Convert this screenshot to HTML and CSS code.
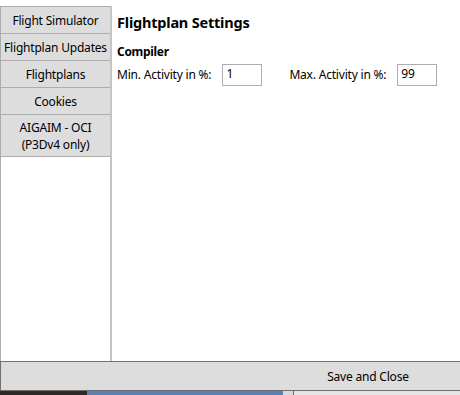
FILE: index.html
```html
<!DOCTYPE html>
<html lang="en">
<head>
    <meta charset="UTF-8">
    <title>Flightplan Settings</title>
    <link rel="stylesheet" href="styles.css">
</head>
<body>
    <div class="window">
        <div class="main">
            <div class="tabs">
                <div class="tab">Flight Simulator</div>
                <div class="tab">Flightplan Updates</div>
                <div class="tab active">Flightplans</div>
                <div class="tab">Cookies</div>
                <div class="tab tall">AIGAIM - OCI<br>(P3Dv4 only)</div>
            </div>
            <div class="content">
                <h1>Flightplan Settings</h1>
                <h2>Compiler</h2>
                <div class="row">
                    <label class="field">
                        <span>Min. Activity in %:</span>
                        <input type="text" value="1">
                    </label>
                    <label class="field">
                        <span>Max. Activity in %:</span>
                        <input type="text" value="99">
                    </label>
                </div>
            </div>
        </div>
        <div class="footer">
            <button class="save">Save and Close</button>
        </div>
        <div class="desktop">
            <div class="dk dark"></div>
            <div class="dk blue"></div>
            <div class="dk grey"></div>
            <div class="dk light"></div>
        </div>
    </div>
</body>
</html>
```
FILE: styles.css
```css
* {
    margin: 0;
    padding: 0;
    box-sizing: border-box;
}

body {
    font-family: 'Noto Sans', 'Open Sans', sans-serif;
    font-size: 12px;
    letter-spacing: -0.2px;
    color: #000000;
    background: #ffffff;
}

.window {
    width: 460px;
    height: 395px;
    display: flex;
    flex-direction: column;
}

.main {
    flex: 1;
    display: flex;
    padding-top: 6px;
}

.tabs {
    width: 112px;
    display: flex;
    flex-direction: column;
    border-left: 1px solid #adadad;
    border-right: 2px solid #c4c4c4;
}

.tab {
    height: 27px;
    display: flex;
    align-items: center;
    justify-content: center;
    text-align: center;
    background: #dddddd;
    border-top: 1px solid #adadad;
    line-height: 17px;
    white-space: nowrap;
}

.tab.tall {
    height: 43px;
    border-bottom: 1px solid #adadad;
}

.content {
    flex: 1;
    padding: 6px 6px 0 5px;
}

h1 {
    font-size: 14.5px;
    font-weight: 700;
    line-height: 20px;
    margin-bottom: 12px;
}

h2 {
    font-size: 12px;
    font-weight: 700;
    letter-spacing: -0.3px;
    line-height: 16px;
    margin-bottom: 2px;
}

.row {
    display: flex;
    gap: 27px;
}

.field {
    display: flex;
    align-items: flex-start;
    gap: 11px;
}

.field span {
    padding-top: 5px;
    line-height: 16px;
}

.field input {
    width: 40px;
    height: 22px;
    margin-top: 2px;
    border: 1px solid #abadb3;
    padding: 0 3px 4px;
    font-family: inherit;
    font-size: 12px;
    letter-spacing: inherit;
    color: #000000;
    background: #ffffff;
    outline: none;
}

.footer {
    height: 30px;
    display: flex;
    background: #dddddd;
    border-top: 1px solid #707070;
    border-bottom: 1px solid #707070;
    border-left: 1px solid #707070;
}

.save {
    margin-left: auto;
    width: 184px;
    background: none;
    border: none;
    font-family: inherit;
    font-size: 12px;
    letter-spacing: inherit;
    color: #000000;
}

.desktop {
    height: 4px;
    display: flex;
}

.dk.dark {
    width: 87px;
    background: #2e2a27;
}

.dk.blue {
    width: 196px;
    background: #5a80b5;
}

.dk.grey {
    width: 11px;
    background: #d9d9d9;
    border-right: 1px solid #6a6a6a;
}

.dk.light {
    flex: 1;
    background: #e6e6e6;
}
```
